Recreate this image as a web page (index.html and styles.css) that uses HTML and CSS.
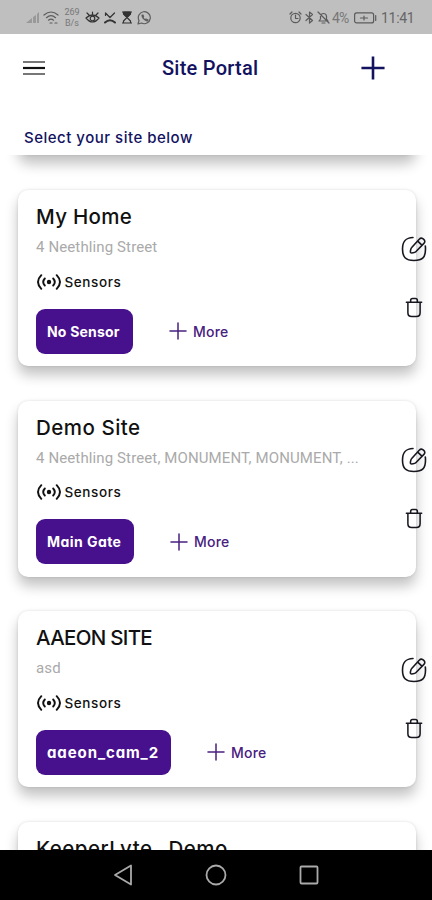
FILE: index.html
```html
<!DOCTYPE html>
<html lang="en">
<head>
<meta charset="utf-8">
<title>Site Portal</title>
<link rel="stylesheet" href="styles.css">
</head>
<body>
<svg class="defs" width="0" height="0" aria-hidden="true">
  <symbol id="edit" viewBox="0 0 26 26"><path d="M12 1.500C4.500 1.800 1.500 5 1.500 13s3 11.500 11.500 11.500 11.500-3 11.500-11.500c0-1.200 0-2-.2-3"/><path d="M18.200 3.200 10.700 11.500c-1 1-1.600 4.500-1.100 5.100s4.200.1 5.200-.9l8.100-8.300c1.300-1.300 1.100-2.900-.1-4-1.300-1.300-3.300-1.500-4.600-.2zM16.700 5.200l4.200 4"/></symbol>
  <symbol id="trash" viewBox="0 0 18 22"><path d="M1 5.500h16M5.500 5V3.500Q5.500 1.500 7.500 1.500h3q2 0 2 2V5M2.600 6v10.500q0 4 4 4h4.800q4 0 4-4V6"/></symbol>
  <symbol id="sensor" viewBox="0 0 26 18"><circle cx="13" cy="9" r="2.200" fill="currentColor" stroke="none"/><path d="M5.300 2.200Q-1.300 9 5.300 15.800M20.700 2.200Q27.300 9 20.700 15.800M8.800 5.500Q5.600 9 8.800 12.500M17.200 5.500Q20.400 9 17.200 12.500"/></symbol>
  <symbol id="plus" viewBox="0 0 18 18"><path d="M9 1v16M1 9h16"/></symbol>
</svg>
<header class="status">
  <svg class="signal" width="14" height="13" viewBox="0 0 14 13"><path d="M0 12 6 7v5zM7 6l3-2v8H7zM11 3l2-2v11h-2z"/></svg>
  <svg class="wifi" width="17" height="14" viewBox="0 0 17 14"><path d="M1 4q7-6 14 0M3.500 6.700q4.500-4 9 0M5.500 9.200q2.500-2 5 0"/><path d="M7 12h2M12 12h2"/></svg>
  <div class="rate"><span>269</span><span>B/s</span></div>
  <svg class="eye" width="15" height="13" viewBox="0 0 15 13"><path d="M1 7q6.500-6 13 0-6.500 8-13 0zM2 2l2 2M7.500 1v3M13 2l-2 2"/><circle cx="7.500" cy="7.500" r="2.300"/></svg>
  <svg class="call" width="14" height="12" viewBox="0 0 14 12"><path d="m2.500 1 4.500 4.500L11.500 1M2.500 1v2.500"/><path class="thick" d="M2 10.500q5-4.500 10 0"/></svg>
  <svg class="glass" width="10" height="13" viewBox="0 0 10 13"><path d="M0 1h10M0 12h10M1.500 1v2L5 6.500 8.500 3V1M1.500 12v-2L5 6.500 8.500 10v2"/><path class="solid" d="M2 1h6v2L5 6 2 3z"/></svg>
  <svg class="whats" width="14" height="14" viewBox="0 0 14 14"><path d="m1 13 1-3.500A6 6 0 1 1 4.500 12zM5 4q0 4 5 6l1-1-2-1-1 .700Q6.500 8 6 6.500l.6-1L6 4z"/></svg>
  <svg class="alarm" width="13" height="13" viewBox="0 0 13 13"><circle cx="6.500" cy="7" r="4.700"/><path d="M6.500 4v3.500H9M1 3l2-2M12 3l-2-2"/></svg>
  <svg class="bt" width="9" height="13" viewBox="0 0 9 13"><path d="m1 3.500 6.500 6L4.500 12V1l3 2.500-6.500 6"/></svg>
  <svg class="bell" width="13" height="13" viewBox="0 0 13 13"><path d="M2 10h9L9.500 8V5Q9 2.500 6.500 2.500T3.500 5v3zM5 12h3M1 1l11 11"/></svg>
  <span class="pct">4%</span>
  <svg class="battery" width="23" height="12" viewBox="0 0 23 12"><rect x=".6" y=".9" width="19" height="10" rx="2"/><path d="M21.700 3.500v5M6.500 6h7M10 4v4"/></svg>
  <span class="time">11:41</span>
</header>
<div class="appbar">
  <svg class="menu" width="22" height="16" viewBox="0 0 22 16"><path class="dim" d="M0 2h22M0 14h22"/><path d="M0 8h22"/></svg>
  <h1>Site Portal</h1>
  <svg class="add" width="26" height="26"><use href="#plus"/></svg>
</div>
<p class="hint">Select your site below</p>
<main class="list">
  <section class="card previous"></section>
  <section class="card">
    <div class="info">
      <h2 class="t1">My Home</h2>
      <p class="address">4 Neethling Street</p>
      <div class="sensors"><svg width="26" height="18"><use href="#sensor"/></svg><span>Sensors</span></div>
      <div class="row"><span class="chip c1">No Sensor</span><span class="more"><svg width="18" height="18"><use href="#plus"/></svg><span>More</span></span></div>
    </div>
    <div class="tools"><svg width="26" height="26"><use href="#edit"/></svg><svg width="18" height="21"><use href="#trash"/></svg></div>
  </section>
  <section class="card">
    <div class="info">
      <h2 class="t2">Demo Site</h2>
      <p class="address">4 Neethling Street, MONUMENT, MONUMENT, ...</p>
      <div class="sensors"><svg width="26" height="18"><use href="#sensor"/></svg><span>Sensors</span></div>
      <div class="row"><span class="chip c2">Main Gate</span><span class="more"><svg width="18" height="18"><use href="#plus"/></svg><span>More</span></span></div>
    </div>
    <div class="tools"><svg width="26" height="26"><use href="#edit"/></svg><svg width="18" height="21"><use href="#trash"/></svg></div>
  </section>
  <section class="card">
    <div class="info">
      <h2 class="t3">AAEON SITE</h2>
      <p class="address">asd</p>
      <div class="sensors"><svg width="26" height="18"><use href="#sensor"/></svg><span>Sensors</span></div>
      <div class="row"><span class="chip c3">aaeon_cam_2</span><span class="more"><svg width="18" height="18"><use href="#plus"/></svg><span>More</span></span></div>
    </div>
    <div class="tools"><svg width="26" height="26"><use href="#edit"/></svg><svg width="18" height="21"><use href="#trash"/></svg></div>
  </section>
  <section class="card">
    <div class="info"><h2 class="t4">KeeperLyte_ Demo</h2></div>
  </section>
</main>
<nav class="nav">
  <svg width="20" height="22" viewBox="0 0 20 22"><path d="M18 1.500v19L2 11z"/></svg>
  <svg width="22" height="22" viewBox="0 0 22 22"><circle cx="11" cy="11" r="9.500"/></svg>
  <svg width="20" height="20" viewBox="0 0 20 20"><rect x="1.500" y="1.500" width="17" height="17" rx="1"/></svg>
</nav>
</body>
</html>
```
FILE: styles.css
```css
* { box-sizing: border-box; margin: 0; padding: 0; }
body {
  width: 432px; height: 900px; overflow: hidden;
  display: flex; flex-direction: column;
  background: #fff; color: #111;
  font-family: Inter, "Open Sans", sans-serif;
  font-feature-settings: "cv11", "ss03";
}
svg { display: block; flex: none; fill: none; stroke: currentColor; stroke-linecap: round; stroke-linejoin: round; }
.defs { position: absolute; }

.status {
  height: 34px; flex: none; display: flex; align-items: center;
  padding: 1px 18px 0 26px; background: #bfbfbf; color: #5c5c5c;
  font-family: Roboto, sans-serif;
}
.status svg { stroke-width: 1.2; }
.status .signal { fill: #999; stroke: none; }
.wifi { margin-left: 3px; }
.rate { display: flex; flex-direction: column; margin-left: 4px; width: 16px; font-size: 9px; line-height: 11px; color: #777; text-align: center; }
.eye { margin-left: 5px; color: #333; }
.call { margin-left: 3px; color: #333; }
.call .thick { stroke-width: 2; }
.glass { margin-left: 5px; color: #333; }
.glass .solid { fill: currentColor; }
.whats { margin-left: 5px; }
.alarm { margin-left: auto; }
.bt { margin-left: 3px; }
.bell { margin-left: 3px; }
.pct { margin-left: 2px; width: 19px; font-size: 14px; letter-spacing: -0.8px; color: #777; }
.battery { margin-left: 3px; }
.time { margin-left: 4px; font-size: 14px; letter-spacing: -0.3px; width: 33px; white-space: nowrap; color: #666; }

.appbar { height: 68px; flex: none; display: flex; align-items: center; padding: 0 46px 0 23px; color: #12125f; }
.menu { color: #111; stroke-width: 2.2; }
.menu path { stroke-linecap: butt; }
.menu .dim { stroke: #777; }
h1 { margin-left: 117px; font: 500 20px/26px Roboto, sans-serif; letter-spacing: 0.25px; white-space: nowrap; }
.add { margin-left: auto; stroke-width: 1.8; stroke-linecap: butt; }
.hint { height: 53px; flex: none; padding: 26px 0 0 24px; font-size: 15px; font-weight: 500; line-height: 20px; letter-spacing: 0.5px; color: #12125f; }

.list { flex: 1; min-height: 0; overflow: hidden; display: flex; flex-direction: column; gap: 34.6px; }
.card {
  height: 176px; flex: none; margin: 0 16px 0 18px; display: flex; justify-content: space-between;
  background: #fff; border-radius: 10px;
  box-shadow: 0 9px 13px rgba(0,0,0,.24), 0 0 3px rgba(0,0,0,.12);
}
.card.previous { margin-top: -175.700px; }
.info { padding: 13px 0 0 18px; white-space: nowrap; }
h2 { font-size: 20.5px; font-weight: 500; line-height: 28px; }
.t1 { letter-spacing: 0.3px; }
.t2 { letter-spacing: 0.5px; }
.t3 { letter-spacing: -0.7px; }
.t4 { letter-spacing: 0.5px; }
.address { margin-top: 6px; font: 400 15px/20px Roboto, sans-serif; letter-spacing: 0.12px; color: #aaa; }
.sensors { margin-top: 15.8px; height: 18px; display: flex; align-items: center; gap: 2.5px; font-size: 13.5px; font-weight: 500; letter-spacing: 0.6px; }
.sensors svg { stroke-width: 1.9; }
.row { margin-top: 18px; display: flex; align-items: center; }
.chip { height: 45px; display: flex; align-items: center; padding-left: 11px; border-radius: 9px; background: #47108c; color: #fff; font-size: 14px; font-weight: 700; }
.c1 { width: 97px; letter-spacing: 0.2px; }
.c2 { width: 98px; letter-spacing: 0.45px; }
.c3 { width: 135px; font-size: 15px; letter-spacing: 0.9px; }
.more { display: flex; align-items: center; gap: 6px; margin-left: 36px; color: #482080; font-size: 14px; font-weight: 500; letter-spacing: 0.2px; }
.more svg { stroke-width: 1.5; }
.tools { margin-right: -11px; padding-top: 46px; display: flex; flex-direction: column; align-items: center; gap: 35px; width: 26px; color: #171720; }
.tools svg { stroke-width: 1.6; }

.nav { height: 50px; flex: none; display: flex; align-items: center; justify-content: center; gap: 72px; background: #000; color: #aaa; }
.nav svg { stroke-width: 1.8; }
```
